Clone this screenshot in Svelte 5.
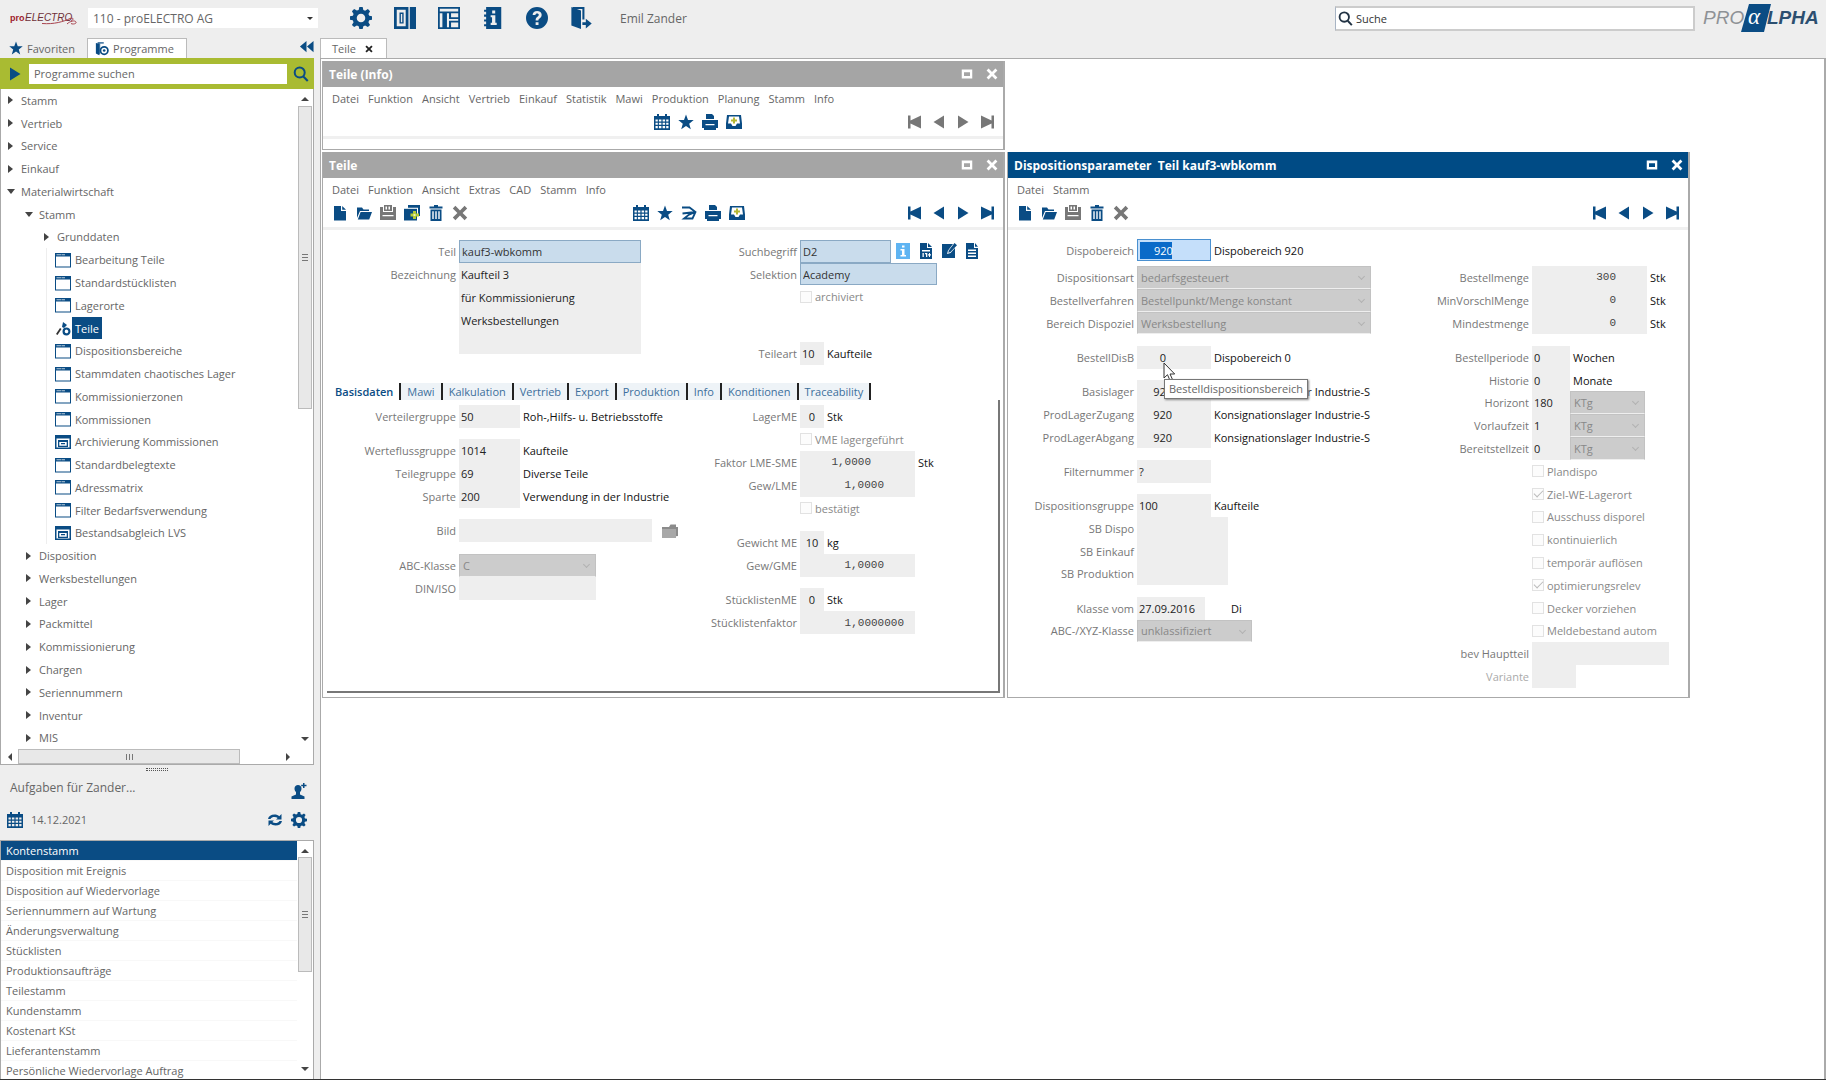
<script lang="ts">
	type Row = {
		at: number;
		label?: string;
		kind?: 'text' | 'area' | 'select' | 'check';
		value?: string;
		size?: string;
		after?: string;
		look?: string;
		checked?: boolean;
		faded?: boolean;
		wideGap?: boolean;
		icons?: string[];
		span?: number;
		trail?: number;
	};

	type TreeRow = { text: string; level: number; open?: boolean; icon?: string; selected?: boolean };

	const tree: TreeRow[] = [
		{ text: 'Stamm', level: 0 },
		{ text: 'Vertrieb', level: 0 },
		{ text: 'Service', level: 0 },
		{ text: 'Einkauf', level: 0 },
		{ text: 'Materialwirtschaft', level: 0, open: true },
		{ text: 'Stamm', level: 1, open: true },
		{ text: 'Grunddaten', level: 2 },
		{ text: 'Bearbeitung Teile', level: 3, icon: 'window' },
		{ text: 'Standardstücklisten', level: 3, icon: 'window' },
		{ text: 'Lagerorte', level: 3, icon: 'window' },
		{ text: 'Teile', level: 3, icon: 'part', selected: true },
		{ text: 'Dispositionsbereiche', level: 3, icon: 'window' },
		{ text: 'Stammdaten chaotisches Lager', level: 3, icon: 'window' },
		{ text: 'Kommissionierzonen', level: 3, icon: 'window' },
		{ text: 'Kommissionen', level: 3, icon: 'window' },
		{ text: 'Archivierung Kommissionen', level: 3, icon: 'batch' },
		{ text: 'Standardbelegtexte', level: 3, icon: 'window' },
		{ text: 'Adressmatrix', level: 3, icon: 'window' },
		{ text: 'Filter Bedarfsverwendung', level: 3, icon: 'window' },
		{ text: 'Bestandsabgleich LVS', level: 3, icon: 'batch' },
		{ text: 'Disposition', level: 1 },
		{ text: 'Werksbestellungen', level: 1 },
		{ text: 'Lager', level: 1 },
		{ text: 'Packmittel', level: 1 },
		{ text: 'Kommissionierung', level: 1 },
		{ text: 'Chargen', level: 1 },
		{ text: 'Seriennummern', level: 1 },
		{ text: 'Inventur', level: 1 },
		{ text: 'MIS', level: 1 }
	];

	const tasks = [
		'Kontenstamm',
		'Disposition mit Ereignis',
		'Disposition auf Wiedervorlage',
		'Seriennummern auf Wartung',
		'Änderungsverwaltung',
		'Stücklisten',
		'Produktionsaufträge',
		'Teilestamm',
		'Kundenstamm',
		'Kostenart KSt',
		'Lieferantenstamm',
		'Persönliche Wiedervorlage Auftrag'
	];

	const topIcons = ['gear', 'columns', 'layout', 'notebook', 'help', 'exit'];
	const navIcons = ['first', 'prev', 'next', 'last'];

	const infoMenu = ['Datei', 'Funktion', 'Ansicht', 'Vertrieb', 'Einkauf', 'Statistik', 'Mawi', 'Produktion', 'Planung', 'Stamm', 'Info'];
	const partMenu = ['Datei', 'Funktion', 'Ansicht', 'Extras', 'CAD', 'Stamm', 'Info'];
	const partTabs = ['Basisdaten', 'Mawi', 'Kalkulation', 'Vertrieb', 'Export', 'Produktion', 'Info', 'Konditionen', 'Traceability'];

	// "at" counts half rows from the top of the form
	const headLeft: Row[] = [
		{ at: 0, label: 'Teil', value: 'kauf3-wbkomm', size: 'w182', look: 'key' },
		{ at: 2, label: 'Bezeichnung', kind: 'area', value: 'Kaufteil 3\nfür Kommissionierung\nWerksbestellungen', size: 'w182', span: 8 }
	];
	const headRight: Row[] = [
		{ at: 0, label: 'Suchbegriff', value: 'D2', size: 'w91', look: 'key', icons: ['info', 'sheet', 'edit', 'doc'] },
		{ at: 2, label: 'Selektion', value: 'Academy', size: 'w137', look: 'key' },
		{ at: 4, kind: 'check', value: 'archiviert' },
		{ at: 9, label: 'Teileart', value: '10', size: 'w24', after: 'Kaufteile' }
	];
	const baseLeft: Row[] = [
		{ at: 0, label: 'Verteilergruppe', value: '50', size: 'w61', after: 'Roh-,Hilfs- u. Betriebsstoffe' },
		{ at: 3, label: 'Werteflussgruppe', value: '1014', size: 'w61', after: 'Kaufteile' },
		{ at: 5, label: 'Teilegruppe', value: '69', size: 'w61', after: 'Diverse Teile' },
		{ at: 7, label: 'Sparte', value: '200', size: 'w61', after: 'Verwendung in der Industrie' },
		{ at: 10, label: 'Bild', value: '', size: 'w193', icons: ['folder'] },
		{ at: 13, label: 'ABC-Klasse', kind: 'select', value: 'C', size: 'w137' },
		{ at: 15, label: 'DIN/ISO', value: '', size: 'w137' }
	];
	const baseRight: Row[] = [
		{ at: 0, label: 'LagerME', value: '0', size: 'w24', look: 'center', after: 'Stk' },
		{ at: 2, kind: 'check', value: 'VME lagergeführt' },
		{ at: 4, label: 'Faktor LME-SME', value: '1,0000', size: 'w115', look: 'mono', trail: 44, after: 'Stk' },
		{ at: 6, label: 'Gew/LME', value: '1,0000', size: 'w115', look: 'mono', trail: 31 },
		{ at: 8, kind: 'check', value: 'bestätigt' },
		{ at: 11, label: 'Gewicht ME', value: '10', size: 'w24', look: 'center', after: 'kg' },
		{ at: 13, label: 'Gew/GME', value: '1,0000', size: 'w115', look: 'mono', trail: 31 },
		{ at: 16, label: 'StücklistenME', value: '0', size: 'w24', look: 'center', after: 'Stk' },
		{ at: 18, label: 'Stücklistenfaktor', value: '1,0000000', size: 'w115', look: 'mono', trail: 11 }
	];
	const areaRow: Row[] = [
		{ at: 0, label: 'Dispobereich', value: '920', size: 'w74', look: 'active', after: 'Dispobereich 920' }
	];
	const planLeft: Row[] = [
		{ at: 0, label: 'Dispositionsart', kind: 'select', value: 'bedarfsgesteuert', size: 'w234' },
		{ at: 2, label: 'Bestellverfahren', kind: 'select', value: 'Bestellpunkt/Menge konstant', size: 'w234' },
		{ at: 4, label: 'Bereich Dispoziel', kind: 'select', value: 'Werksbestellung', size: 'w234' },
		{ at: 7, label: 'BestellDisB', value: '0', size: 'w74', look: 'right', trail: 45, after: 'Dispobereich 0' },
		{ at: 10, label: 'Basislager', value: '920', size: 'w74', look: 'right', trail: 39, after: 'Konsignationslager Industrie-S' },
		{ at: 12, label: 'ProdLagerZugang', value: '920', size: 'w74', look: 'right', trail: 39, after: 'Konsignationslager Industrie-S' },
		{ at: 14, label: 'ProdLagerAbgang', value: '920', size: 'w74', look: 'right', trail: 39, after: 'Konsignationslager Industrie-S' },
		{ at: 17, label: 'Filternummer', value: '?', size: 'w74' },
		{ at: 20, label: 'Dispositionsgruppe', value: '100', size: 'w74', after: 'Kaufteile' },
		{ at: 22, label: 'SB Dispo', value: '', size: 'w91' },
		{ at: 24, label: 'SB Einkauf', value: '', size: 'w91' },
		{ at: 26, label: 'SB Produktion', value: '', size: 'w91' },
		{ at: 29, label: 'Klasse vom', value: '27.09.2016', size: 'w68', after: 'Di', wideGap: true },
		{ at: 31, label: 'ABC-/XYZ-Klasse', kind: 'select', value: 'unklassifiziert', size: 'w115' }
	];
	const planRight: Row[] = [
		{ at: 0, label: 'Bestellmenge', value: '300', size: 'w115', look: 'mono', trail: 31, after: 'Stk' },
		{ at: 2, label: 'MinVorschlMenge', value: '0', size: 'w115', look: 'mono', trail: 31, after: 'Stk' },
		{ at: 4, label: 'Mindestmenge', value: '0', size: 'w115', look: 'mono', trail: 31, after: 'Stk' },
		{ at: 7, label: 'Bestellperiode', value: '0', size: 'w38', after: 'Wochen' },
		{ at: 9, label: 'Historie', value: '0', size: 'w38', after: 'Monate' },
		{ at: 11, label: 'Horizont', value: '180', size: 'w38', look: 'unit' },
		{ at: 13, label: 'Vorlaufzeit', value: '1', size: 'w38', look: 'unit' },
		{ at: 15, label: 'Bereitstellzeit', value: '0', size: 'w38', look: 'unit' },
		{ at: 17, kind: 'check', value: 'Plandispo' },
		{ at: 19, kind: 'check', value: 'Ziel-WE-Lagerort', checked: true },
		{ at: 21, kind: 'check', value: 'Ausschuss disporel' },
		{ at: 23, kind: 'check', value: 'kontinuierlich' },
		{ at: 25, kind: 'check', value: 'temporär auflösen' },
		{ at: 27, kind: 'check', value: 'optimierungsrelev', checked: true },
		{ at: 29, kind: 'check', value: 'Decker vorziehen' },
		{ at: 31, kind: 'check', value: 'Meldebestand autom' },
		{ at: 33, label: 'bev Hauptteil', value: '', size: 'w137' },
		{ at: 35, label: 'Variante', value: '', size: 'w44', faded: true }
	];
</script>

{#snippet icon(name: string)}
	<svg class="icon" viewBox="0 0 16 16" fill="currentColor" aria-hidden="true">
		{#if name === 'gear'}
			<path fill-rule="evenodd" d="M6.8 0h2.4l.5 2.200 1.300.5 2-1.200 1.600 1.600-1.200 2 .6 1.300 2 .4v2.400l-2.100.5-.5 1.300 1.200 2-1.600 1.600-2-1.200-1.300.6L9.200 16H6.800l-.5-2-1.300-.6-2 1.200L1.400 13l1.200-2-.6-1.300L0 9.200V6.800l2.100-.5.5-1.300-1.200-2L3 1.400l2 1.200 1.300-.5zM8 4.900a3.100 3.100 0 1 0 0 6.200 3.100 3.100 0 0 0 0-6.200z" />
		{:else if name === 'columns'}
			<path fill-rule="evenodd" d="M0 0h10.500v16H0zM2 2v12h6.500V2zM11.500 0h4.500v16h-4.500z" /><path fill-rule="evenodd" d="M4 4h3v8H4zM5 5v6h1V5z" />
		{:else if name === 'layout'}
			<path fill-rule="evenodd" d="M0 0h16v16H0zM1.300 1.300v1.900h13.400V1.300zM1.300 4.500v10.200h1.900V4.500zM6.500 4.500v10.200h1.500V10h6.700V8.800H8V4.500zM9.500 4.500v3h5.200v-3zM9.500 11.300v3.400h5.200v-3.400z" />
		{:else if name === 'notebook'}
			<path fill-rule="evenodd" d="M3 0h11v16H3v-2H1.500v-1.500H3v-2H1.500V9H3V7H1.500V5.500H3v-2H1.500V2H3zM7.400 2.500v2.200h2.200V2.500zM6.300 6v1.500h1v4h-1V13h4.400v-1.500h-1V6z" />
		{:else if name === 'help'}
			<path fill-rule="evenodd" d="M8 0a8 8 0 1 0 0 16A8 8 0 0 0 8 0zM4.800 5.800C4.900 4 6.200 2.900 8.100 2.900c1.900 0 3.300 1.100 3.300 2.800 0 1.300-.7 2-1.500 2.600-.8.500-.9.800-.9 1.500H7c0-1.300.3-2 1.300-2.700.7-.5 1-.8 1-1.400 0-.6-.5-1-1.200-1-.8 0-1.200.4-1.300 1.200zM7 11h2.100v2.100H7z" />
		{:else if name === 'exit'}
			<path d="M1 0l7 2.500V16l-7-2.500z" /><path d="M2 0h8.500v9H9V1.400H2zM9 11h2.500V8.500L15.800 12l-4.300 3.700V13H9z" />
		{:else if name === 'star'}
			<path d="M8 .5l2 5.400 5.700.2-4.500 3.600 1.600 5.600L8 12.100l-4.800 3.200 1.600-5.600L.3 6.100 6 5.900z" />
		{:else if name === 'programs'}
			<path d="M1 1l4 1v13l-4-2z" /><path d="M3 0h7v2H6v12H3z" opacity=".7" />
			<path fill-rule="evenodd" d="M10.500 4.500a5 5 0 1 0 0 10.500 5 5 0 0 0 0-10.500zM10.500 6.500a3.200 3.200 0 1 1 0 6.500 3.200 3.200 0 0 1 0-6.500z" /><circle cx="10.500" cy="9.700" r="1.500" />
		{:else if name === 'search'}
			<path fill="none" stroke="currentColor" stroke-width="2" d="M6.700 1.500a5 5 0 1 1 0 10 5 5 0 0 1 0-10z" /><path d="M9.600 11.200l1.500-1.500 4.400 4.600-1.500 1.500z" />
		{:else if name === 'collapse'}
			<path d="M8 2v12L1 8zM15.500 2v12l-7-6z" />
		{:else if name === 'window'}
			<path fill-rule="evenodd" d="M0 1h16v14.500H0zM1 4.500v10h14v-10z" /><path fill="#fff" d="M1.500 2.300h5v1h-5zM7 2.300h3v1H7z" opacity=".7" />
		{:else if name === 'batch'}
			<path fill-rule="evenodd" d="M0 1h16v14H0zM1.500 4.500v9h13v-9z" /><path fill-rule="evenodd" d="M3 6h10v7H3zM4.300 8v3.800h7.400V8zM6 9h4v1.200H6z" />
		{:else if name === 'part'}
			<path d="M1 14L5 8l1.500 1-4 6z" fill="#333" /><path d="M8 2l4 3-3 3-2-1z" />
			<path fill="none" stroke="currentColor" stroke-width="2.200" d="M11.500 8.500a2.900 2.900 0 1 1 0 5.800 2.900 2.900 0 0 1 0-5.800z" />
		{:else if name === 'user'}
			<path d="M7 2c2 0 3.500 1.500 3.500 3.500 0 1.700-.8 2.800-1.500 3.600v2.400l4.500 2V16h-13v-2.500l4.500-2V9.100C4.300 8.300 3.500 7.200 3.500 5.500 3.500 3.500 5 2 7 2zM12 0h1.500v1.800h2v1.500h-2V5H12V3.300h-1.800V1.800H12z" />
		{:else if name === 'calendar'}
			<path fill-rule="evenodd" d="M3 0h2v2h6V0h2v2h3v14H0V2h3zM1.500 5.500v2h2.300v-2zM4.900 5.500v2h2.500v-2zM8.600 5.500v2h2.500v-2zM12.200 5.500v2h2.300v-2zM1.500 8.700v2h2.300v-2zM4.900 8.700v2h2.500v-2zM8.600 8.700v2h2.500v-2zM12.200 8.700v2h2.300v-2zM1.500 12v2.300h2.300V12zM4.900 12v2.300h2.500V12zM8.600 12v2.300h2.500V12zM12.200 12v2.300h2.300V12z" />
		{:else if name === 'refresh'}
			<path d="M1 7c.6-3 3-4.500 6.500-4.500 2 0 3.600.6 4.800 1.700L14.500 2v5.500H9L10.700 6C9.800 5.300 8.800 5 7.500 5 5.600 5 4.400 5.600 3.500 7zM15 9c-.6 3-3 4.500-6.500 4.500-2 0-3.600-.6-4.800-1.700L1.500 14V8.500H7L5.300 10c.9.700 1.900 1 3.200 1 1.900 0 3.100-.6 4-2z" />
		{:else if name === 'new'}
			<path d="M2 1h7v5h5v9.500H2z" /><path d="M10.200 1L14 4.800h-3.800z" />
		{:else if name === 'open'}
			<path d="M1 2.500h5l1.500 2H13V6H4L1 13z" /><path d="M4.600 7H16l-2.800 7.500H1.800z" />
		{:else if name === 'save'}
			<path fill-rule="evenodd" d="M0 2h3v5h10V2h3v13H0zM2.500 10v1.200h11V10z" /><path fill-rule="evenodd" d="M4 0h8v6H4zM5.500 1.500v3h1.500v-3zM8.500 1.500v3H10v-3z" />
		{:else if name === 'copy'}
			<path d="M4 0h12v11h-2V2.800H4z" /><path d="M0 3.800h13V15.500H0z" /><path fill="#b5cc34" d="M9 6h3v2.500h3v3h-3V14H9v-2.500H6.500v-3H9z" /><path fill="#fff" d="M9.500 9h2v2h-2z" opacity=".7" />
		{:else if name === 'trash'}
			<path fill-rule="evenodd" d="M6 0h4v1.500h4.500v2h-13v-2H6zM2.500 4.500h11V16h-11zM4.300 6.300v7.700h1.400V6.300zM7.300 6.300v7.700h1.400V6.300zM10.300 6.300v7.700h1.400V6.300z" />
		{:else if name === 'cross'}
			<path d="M3.400.8L8 5.400 12.600.8l2.600 2.600L10.600 8l4.600 4.600-2.600 2.600L8 10.600l-4.600 4.600-2.600-2.600L5.400 8 .8 3.400z" />
		{:else if name === 'flow'}
			<path fill="none" stroke="currentColor" stroke-width="1.800" d="M1 2.500h7.500l6 4.500-3 6.500H3l4.500-3.500 7-3-13 1.500" />
		{:else if name === 'print'}
			<path d="M4 0h6l2 2v3H4z" /><path fill-rule="evenodd" d="M0 6h16v8h-2v2H2v-2H0zM3.500 10v1.200h9V10z" />
		{:else if name === 'inbox'}
			<path fill-rule="evenodd" d="M1 1h14l1 8.500V15H0V9.500zM3 2.500L2 9.500h3l1.500 2.500h3L11 9.500h3l-1-7z" /><path fill="#b5b834" d="M7 3.500h2v2h2v2H9v2H7v-2H5v-2h2z" />
		{:else if name === 'first'}
			<path d="M1 1.500h2.500v5L14 1.500v13L3.500 9.500v5H1z" />
		{:else if name === 'prev'}
			<path d="M13 1.500v13L2.500 8z" />
		{:else if name === 'next'}
			<path d="M3 1.500v13L13.500 8z" />
		{:else if name === 'last'}
			<path d="M15 1.500h-2.500v5L2 1.500v13l10.500-5v5H15z" />
		{:else if name === 'info'}
			<path fill="#5fb4f2" d="M1 0h14v16H1z" /><path fill="#fff" d="M7 2.500h2.500v2H7zM5.500 6h4v6H11v1.500H5.500V12H7V7.500H5.500z" />
		{:else if name === 'sheet'}
			<path fill-rule="evenodd" d="M2 0h7v5h5v11H2zM4 7v1.500h8V7zM4.500 10v4h1.300v-4zM7 10v1.300h1V14h1.300v-4zM11 10v1.300h-1v1.200h1V14h1v-1.500h1v-1.200h-1V10z" /><path d="M10 0l4 4h-4z" />
		{:else if name === 'edit'}
			<path d="M1 1h11L7 7.500 6 11l3.500-1L14 5v10H1z" /><path d="M13.500 0L16 2.300 9.500 9 7.200 9.700 8 7.300z" />
		{:else if name === 'doc'}
			<path fill-rule="evenodd" d="M2 0h8v5h4v11H2zM4 6.500V8h8V6.500zM4 9.500V11h8V9.500zM4 12.500V14h8v-1.500z" /><path d="M11 0l3 3.800h-3z" />
		{:else if name === 'folder'}
			<path fill="#8b8b8b" d="M0 15V4h7l1.500-2.500H14V4h2v9z" /><path fill="#a8a8a8" d="M0 6h14v9H0z" />
		{:else if name === 'maximize'}
			<path fill-rule="evenodd" d="M1 2h14v12H1zM4 5.500v5h8v-5z" />
		{/if}
	</svg>
{/snippet}

{#snippet tools(names: string[], gray: string[] = [])}
	{#each names as name}
		<button class="tool" class:gray={gray.includes(name)} type="button" aria-label={name}>{@render icon(name)}</button>
	{/each}
{/snippet}

{#snippet titleBar(title: string)}
	<header class="title-bar">
		<h2>{title}</h2>
		<button type="button" aria-label="Maximieren">{@render icon('maximize')}</button>
		<button type="button" aria-label="Schließen">{@render icon('cross')}</button>
	</header>
{/snippet}

{#snippet menuBar(items: string[])}
	<nav class="menu-bar">
		{#each items as item}
			<button type="button">{item}</button>
		{/each}
	</nav>
{/snippet}

{#snippet form(id: string, rows: Row[])}
	{#each rows as row}
		<div class="row" class:tall={row.kind === 'area'} class:faded={row.faded} style:grid-row="{row.at + 1} / span {row.span ?? 2}">
			{#if row.kind === 'check'}
				<label class="check">
					<input type="checkbox" checked={row.checked} disabled />
					<span>{row.value}</span>
				</label>
			{:else}
				<label class="caption" for="{id}-{row.at}">{row.label}</label>
				{#if row.kind === 'area'}
					<textarea id="{id}-{row.at}" class="field {row.size}">{row.value}</textarea>
				{:else if row.kind === 'select'}
					<span class="drop {row.size}">
						<select id="{id}-{row.at}" disabled><option>{row.value}</option></select>
					</span>
				{:else}
					<input
						id="{id}-{row.at}"
						class="field {row.size} {row.look ?? ''}"
						type="text"
						value={row.value}
						style:padding-right={row.trail ? `${row.trail}px` : null}
					/>
				{/if}
				{#if row.look === 'unit'}
					<span class="drop w75">
						<select aria-label="{row.label} Einheit" disabled><option>KTg</option></select>
					</span>
				{/if}
				{#if row.after}
					<span class="after" class:wide={row.wideGap}>{row.after}</span>
				{/if}
				{#if row.icons}
					<span class="row-icons">{@render tools(row.icons)}</span>
				{/if}
			{/if}
		</div>
	{/each}
{/snippet}

<div class="app">
	<header class="top-bar">
		<svg class="brand" viewBox="0 0 72 20" role="img" aria-label="proELECTRO">
			<text x="0" y="13" class="brand-pro">pro</text>
			<text x="15" y="13" class="brand-electro">ELECTRO</text>
			<path d="M32 15.500c12 1 22-2 28-5 4-1 4 1 1 2.500M57 16c3-3 8-4 9-2s-4 2.500-5 1.500" fill="none" stroke="#a8434e" />
		</svg>
		<span class="drop company">
			<select aria-label="Firma"><option>110 - proELECTRO AG</option></select>
		</span>
		<div class="top-tools">{@render tools(topIcons)}</div>
		<span class="user">Emil Zander</span>
		<label class="global-search">
			{@render icon('search')}
			<input type="text" value="Suche" aria-label="Suche" />
		</label>
		<svg class="logo" viewBox="0 0 122 30" role="img" aria-label="proALPHA">
			<text x="1" y="21" class="logo-pro">PRO</text>
			<path d="M47 1h22l-7 28H39z" fill="#0a4c84" />
			<text x="46" y="21" class="logo-alpha">α</text>
			<text x="65" y="21" class="logo-lpha">LPHA</text>
		</svg>
	</header>

	<aside class="sidebar">
		<div class="side-tabs">
			<button class="side-tab" type="button">{@render icon('star')}Favoriten</button>
			<button class="side-tab active" type="button">{@render icon('programs')}Programme</button>
			<button class="collapse" type="button" aria-label="Einklappen">{@render icon('collapse')}</button>
		</div>
		<div class="program-search">
			<span class="play">{@render icon('next')}</span>
			<input type="text" value="Programme suchen" aria-label="Programme suchen" />
			{@render icon('search')}
		</div>
		<div class="tree">
			<ul>
				{#each tree as node}
					<li class="level-{node.level}">
						{#if node.icon}
							{@render icon(node.icon)}
						{:else}
							<i class="arrow" class:open={node.open}></i>
						{/if}
						<a href="#programm" class:selected={node.selected}>{node.text}</a>
					</li>
				{/each}
			</ul>
			<div class="v-scroll">
				<i class="tip up"></i>
				<i class="thumb tall"></i>
				<i class="tip down"></i>
			</div>
			<div class="h-scroll">
				<i class="tip left"></i>
				<i class="thumb flat"></i>
				<i class="tip right"></i>
			</div>
		</div>
		<i class="grip"></i>
		<section class="tasks">
			<div class="tasks-head">
				<h3>Aufgaben für Zander...</h3>
				{@render icon('user')}
			</div>
			<div class="tasks-date">
				{@render icon('calendar')}
				<span>14.12.2021</span>
				{@render icon('refresh')}
				{@render icon('gear')}
			</div>
			<div class="task-list">
				<ul>
					{#each tasks as task, i}
						<li class:selected={i === 0}>{task}</li>
					{/each}
				</ul>
				<div class="v-scroll">
					<i class="tip up"></i>
					<i class="thumb short"></i>
					<i class="tip down"></i>
				</div>
			</div>
		</section>
	</aside>

	<main class="workspace">
		<div class="work-tabs">
			<div class="work-tab">
				<span>Teile</span>
				<button type="button" aria-label="Tab schließen">{@render icon('cross')}</button>
			</div>
		</div>
		<div class="desktop">
			<section class="window info-window">
				{@render titleBar('Teile (Info)')}
				{@render menuBar(infoMenu)}
				<div class="tool-bar shifted">
					<div></div>
					<div>{@render tools(['calendar', 'star', 'print', 'inbox'])}</div>
					<div>{@render tools(navIcons, navIcons)}</div>
				</div>
			</section>

			<section class="window part-window">
				{@render titleBar('Teile')}
				{@render menuBar(partMenu)}
				<div class="tool-bar">
					<div>{@render tools(['new', 'open', 'save', 'copy', 'trash', 'cross'], ['save', 'cross'])}</div>
					<div>{@render tools(['calendar', 'star', 'flow', 'print', 'inbox'])}</div>
					<div>{@render tools(navIcons)}</div>
				</div>
				<div class="part-head">
					<div class="form">{@render form('head-left', headLeft)}</div>
					<div class="form">{@render form('head-right', headRight)}</div>
				</div>
				<div class="part-tabs">
					{#each partTabs as tab, i}
						<button type="button" class:active={i === 0}>{tab}</button>
					{/each}
				</div>
				<div class="part-panel">
					<div class="form">{@render form('base-left', baseLeft)}</div>
					<div class="form">{@render form('base-right', baseRight)}</div>
				</div>
			</section>

			<section class="window plan-window">
				{@render titleBar('Dispositionsparameter  Teil kauf3-wbkomm')}
				{@render menuBar(['Datei', 'Stamm'])}
				<div class="tool-bar">
					<div>{@render tools(['new', 'open', 'save', 'trash', 'cross'], ['save', 'cross'])}</div>
					<div></div>
					<div>{@render tools(navIcons)}</div>
				</div>
				<div class="plan-area">{@render form('area', areaRow)}</div>
				<div class="plan-body">
					<div class="form">{@render form('plan-left', planLeft)}</div>
					<div class="form">{@render form('plan-right', planRight)}</div>
				</div>
				<svg class="pointer" viewBox="0 0 13 20" aria-hidden="true">
					<path d="M1 1v15l3.500-3.300L7 18.500l2.500-1L7 12h4.700z" fill="#fff" stroke="#333" />
				</svg>
				<div class="tooltip" role="tooltip">Bestelldispositionsbereich</div>
			</section>
		</div>
	</main>
</div>

<style>
	:global(body) {
		background: #eee;
	}

	.app {
		--blue: #0a4c84;
		display: grid;
		grid-template-columns: 320px minmax(0, 1fr);
		grid-template-rows: 36px minmax(0, 1fr);
		height: 100vh;
		box-sizing: border-box;
		border-bottom: 1px solid #333;
		overflow: hidden;
		font-family: 'Open Sans', 'Noto Sans', sans-serif;
		font-size: 11px;
		color: #666;
	}

	.app :global(*) {
		box-sizing: border-box;
	}

	button,
	input,
	select,
	textarea {
		font: inherit;
		color: inherit;
		border: 0;
		margin: 0;
		padding: 0;
		background: none;
		border-radius: 0;
		outline: none;
	}

	ul {
		list-style: none;
		margin: 0;
		padding: 0;
	}

	.icon {
		width: 16px;
		height: 16px;
		flex: none;
		display: block;
		color: var(--blue);
	}

	/* top bar */
	.top-bar {
		grid-column: 1 / -1;
		display: flex;
		align-items: center;
		padding: 0 2px 0 10px;
	}

	.brand {
		width: 72px;
		height: 20px;
		margin-right: 6px;
	}

	.brand-pro {
		font: bold 9px 'Liberation Sans', sans-serif;
		fill: #a01c2c;
	}

	.brand-electro {
		font: italic 10px 'Liberation Sans', sans-serif;
		fill: #6e3038;
	}

	.company {
		width: 230px;
		height: 20px;
		margin-right: 32px;
	}

	.drop.company select {
		background: #fff;
		border: 0;
		padding-left: 5px;
		font-size: 12px;
		color: #666;
		opacity: 1;
	}

	.drop.company::after {
		border: 3px solid transparent;
		border-top-color: #333;
		width: 0;
		height: 0;
		transform: none;
		right: 5px;
		top: 9px;
	}

	.top-tools {
		display: flex;
		gap: 22px;
	}

	.top-tools .icon {
		width: 22px;
		height: 22px;
	}

	.user {
		margin-left: 28px;
		font-size: 12px;
		color: #666;
	}

	.global-search {
		display: flex;
		align-items: center;
		gap: 3px;
		width: 360px;
		height: 25px;
		margin-left: auto;
		padding-left: 2px;
		background: #fff;
		border: 2px solid #ccc;
		border-left: 1px solid #a8b4c4;
	}

	.global-search .icon {
		width: 15px;
		height: 15px;
		color: #234;
	}

	.global-search input {
		flex: 1;
		color: #333;
	}

	.logo {
		width: 122px;
		height: 30px;
		margin-left: 7px;
	}

	.logo-pro {
		font: italic 19px 'Liberation Sans', sans-serif;
		fill: #8e9296;
	}

	.logo-lpha {
		font: italic bold 19px 'Liberation Sans', sans-serif;
		fill: #2c4f70;
	}

	.logo-alpha {
		font: italic 23px 'Liberation Serif', serif;
		fill: #fff;
	}

	/* sidebar */
	.sidebar {
		display: flex;
		flex-direction: column;
		min-height: 0;
		padding-right: 6px;
	}

	.side-tabs {
		display: flex;
		align-items: end;
		height: 22px;
		flex: none;
	}

	.side-tab {
		display: flex;
		align-items: center;
		gap: 4px;
		height: 20px;
		padding: 0 12px 0 9px;
	}

	.side-tab .icon {
		width: 14px;
		height: 14px;
	}

	.side-tab.active {
		background: #fff;
		border: 1px solid #bbb;
		border-bottom: 0;
		padding: 0 12px 0 7px;
	}

	.collapse {
		margin: 0 0 4px auto;
	}

	.collapse .icon {
		width: 15px;
		height: 15px;
	}

	.program-search {
		display: flex;
		align-items: center;
		gap: 6px;
		flex: none;
		height: 31px;
		padding: 0 5px 0 7px;
		background: #a9bb32;
	}

	.program-search input {
		flex: 1;
		min-width: 0;
		height: 20px;
		padding-left: 5px;
		background: #fff;
	}

	.tree {
		flex: 1;
		min-height: 0;
		display: grid;
		grid-template-columns: minmax(0, 1fr) 16px;
		grid-template-rows: minmax(0, 1fr) 15px;
		background: #fff;
		border: 1px solid #aaa;
		border-top: 0;
	}

	.tree ul {
		display: flex;
		flex-direction: column;
		min-height: 0;
	}

	.tree li {
		flex: 1;
		min-height: 0;
		display: flex;
		align-items: center;
		white-space: nowrap;
	}

	.tree a {
		display: flex;
		align-items: center;
		height: 22px;
		padding: 0 3px;
		color: inherit;
		text-decoration: none;
	}

	.tree a.selected {
		background: var(--blue);
		color: #fff;
	}

	.level-0 {
		padding-left: 6px;
	}

	.level-1 {
		padding-left: 24px;
	}

	.level-2 {
		padding-left: 42px;
	}

	.level-3 {
		padding-left: 54px;
		gap: 1px;
		background: linear-gradient(#eee, #eee) 45px 0 / 1px 100% no-repeat;
	}

	.arrow {
		width: 11px;
		height: 8px;
		border: 4px solid transparent;
		border-left: 5px solid #444;
		margin: 0 -1px 0 1px;
	}

	.arrow.open {
		width: 8px;
		height: 4px;
		border: 4px solid transparent;
		border-top: 5px solid #444;
		border-bottom: 0;
		margin: 0 3px 0 0;
	}

	.v-scroll {
		display: flex;
		flex-direction: column;
		align-items: center;
		padding: 8px 0;
	}

	.h-scroll {
		display: flex;
		align-items: center;
		padding: 0 7px;
	}

	.tip {
		width: 0;
		height: 0;
		flex: none;
		border: 4px solid transparent;
	}

	.tip.up {
		border-top: 0;
		border-bottom-color: #444;
	}

	.tip.down {
		border-bottom: 0;
		border-top-color: #444;
		margin-top: auto;
	}

	.tip.left {
		border-left: 0;
		border-right-color: #444;
	}

	.tip.right {
		border-right: 0;
		border-left-color: #444;
		margin-left: auto;
	}

	.thumb {
		display: flex;
		align-items: center;
		justify-content: center;
		background: #e8e8e8;
		border: 1px solid #bbb;
	}

	.thumb::before {
		content: '';
		width: 6px;
		height: 7px;
		background: repeating-linear-gradient(#777 0 1px, transparent 1px 3px);
	}

	.thumb.tall {
		width: 14px;
		height: 47%;
		margin-top: 5px;
	}

	.thumb.short {
		width: 14px;
		height: 52%;
		margin-top: 4px;
	}

	.thumb.flat {
		width: 222px;
		height: 15px;
		margin-left: 6px;
	}

	.thumb.flat::before {
		width: 7px;
		height: 6px;
		background: repeating-linear-gradient(90deg, #777 0 1px, transparent 1px 3px);
	}

	.grip {
		width: 22px;
		height: 3px;
		flex: none;
		margin: 3px auto 4px;
		border-top: 1px dotted #555;
		border-bottom: 1px dotted #555;
	}

	.tasks {
		flex: none;
	}

	.tasks-head,
	.tasks-date {
		display: flex;
		align-items: center;
		padding: 0 7px;
	}

	.tasks-head {
		height: 24px;
	}

	.tasks-head h3 {
		margin: 0 auto 0 3px;
		font-size: 12px;
		font-weight: 400;
	}

	.tasks-head .icon {
		align-self: end;
	}

	.tasks-date {
		height: 41px;
	}

	.tasks-date span {
		margin: 0 auto 0 8px;
	}

	.tasks-date .icon:last-child {
		margin-left: 8px;
	}

	.task-list {
		display: grid;
		grid-template-columns: minmax(0, 1fr) 16px;
		height: 239px;
		overflow: hidden;
		background: #fff;
		border: 1px solid #aaa;
		border-bottom: 0;
	}

	.task-list li {
		height: 20px;
		line-height: 20px;
		padding-left: 5px;
		border-bottom: 1px solid #f8f8f8;
	}

	.task-list li.selected {
		background: var(--blue);
		color: #fff;
	}

	.task-list .v-scroll {
		height: 238px;
	}

	/* workspace */
	.workspace {
		display: flex;
		flex-direction: column;
		min-width: 0;
		min-height: 0;
	}

	.work-tabs {
		flex: none;
		height: 22px;
		display: flex;
		align-items: end;
	}

	.work-tab {
		display: flex;
		align-items: center;
		gap: 9px;
		height: 20px;
		padding: 0 13px 0 11px;
		background: #fff;
		border: 1px solid #bbb;
		border-bottom: 0;
	}

	.work-tab .icon {
		width: 8px;
		height: 8px;
		color: #222;
	}

	.desktop {
		position: relative;
		flex: 1;
		background: #fff;
		border: 1px solid #aaa;
		border-width: 1px 2px 0 1px;
	}

	.window {
		position: absolute;
		width: 683px;
		background: #fff;
		border: 1px solid #aaa;
		border-width: 0 2px 1px 1px;
	}

	.info-window {
		left: 1px;
		top: 2px;
		height: 89px;
	}

	.part-window {
		left: 1px;
		top: 93px;
		height: 546px;
	}

	.plan-window {
		left: 686px;
		top: 93px;
		height: 546px;
	}

	.title-bar {
		display: flex;
		align-items: center;
		gap: 13px;
		height: 26px;
		padding: 0 5px 0 6px;
		background: #a5a5a5;
		color: #fff;
	}

	.title-bar h2 {
		margin: 0 auto 0 0;
		font-size: 12px;
		font-weight: 700;
		white-space: pre;
	}

	.title-bar .icon {
		width: 12px;
		height: 12px;
		color: #fff;
	}

	.plan-window .title-bar {
		background: #004b85;
	}

	.menu-bar {
		display: flex;
		gap: 9px;
		height: 22px;
		padding: 0 9px;
	}

	.tool {
		display: block;
	}

	.tool.gray .icon {
		color: #777;
	}

	.tool-bar {
		display: grid;
		grid-template-columns: 301px 1fr auto;
		align-items: center;
		height: 30px;
		padding: 0 8px 2px 9px;
		border-bottom: 3px solid #f0f0f0;
	}

	.tool-bar.shifted {
		grid-template-columns: 322px 1fr auto;
	}

	.tool-bar > div {
		display: flex;
		gap: 8px;
	}

	/* forms: every row spans two half-row tracks */
	.form {
		display: grid;
	}

	.row {
		display: flex;
		min-height: 0;
		align-items: center;
		white-space: nowrap;
	}

	.row.tall {
		align-items: start;
		line-height: 23px;
	}

	.part-head,
	.part-panel,
	.plan-body {
		display: grid;
	}

	.part-head {
		grid-template-columns: 341px 1fr;
		height: 125px;
		margin-top: 10px;
	}

	.part-head .form {
		grid-template-rows: repeat(11, minmax(0, 1fr));
	}

	.part-panel {
		grid-template-columns: 341px 1fr;
		align-content: start;
		height: 293px;
		margin: 0 3px 0 4px;
		padding-top: 5px;
		border: solid #777;
		border-width: 0 2px 2px 0;
	}

	.part-panel .form {
		height: 229px;
		margin-left: -4px;
		grid-template-rows: repeat(20, minmax(0, 1fr));
	}

	.plan-area {
		height: 23px;
		margin-top: 9px;
	}

	.plan-body {
		grid-template-columns: 395px 1fr;
		height: 422px;
		margin-top: 4px;
	}

	.plan-body .form {
		grid-template-rows: repeat(37, minmax(0, 1fr));
	}

	.caption {
		flex: none;
		width: 133px;
		margin-right: 3px;
		text-align: right;
		color: #777;
	}

	.plan-window .caption {
		width: 126px;
	}

	.check {
		display: flex;
		align-items: center;
		gap: 3px;
		margin-left: 136px;
		color: #888;
	}

	.plan-window .check {
		margin-left: 129px;
	}

	.check input {
		appearance: none;
		width: 12px;
		height: 12px;
		background: #fcfcfc;
		border: 1px solid #e2e2e2;
	}

	.check input:checked::before {
		content: '';
		display: block;
		width: 8px;
		height: 4px;
		margin: 1px;
		border: 1px solid #bbb;
		border-width: 0 0 1px 1px;
		transform: rotate(-45deg);
	}

	.faded .caption {
		color: #aaa;
	}

	.field {
		flex: none;
		align-self: stretch;
		height: auto;
		padding: 0 2px;
		background: #eee;
		color: #222;
	}

	textarea.field {
		line-height: 23px;
		resize: none;
		overflow: hidden;
	}

	.field.key {
		background: #c9dcec;
		border: 1px solid #8aa9c4;
		color: #333;
	}

	.field.center {
		text-align: center;
	}

	.field.right {
		text-align: right;
	}

	.field.mono {
		text-align: right;
		font-family: 'Liberation Mono', monospace;
		color: #444;
	}

	/* text of the focused field is shown selected */
	.field.active {
		padding-left: 16px;
		border: 1px solid #4a90d0;
		background: linear-gradient(#0a6ac8, #0a6ac8) 2px 2px / 32px 17px no-repeat #c5dffa;
		color: #fff;
	}

	.plan-area .row {
		height: 22px;
	}

	.drop {
		position: relative;
		display: block;
		flex: none;
		align-self: stretch;
	}

	.top-bar .drop {
		align-self: center;
	}

	.drop select {
		appearance: none;
		display: block;
		width: 100%;
		height: 100%;
		padding-left: 3px;
		background: #ccc;
		border: 1px solid #c2c2c2;
		border-bottom-color: #eee;
		color: #888;
		opacity: 1;
	}

	.drop::after {
		content: '';
		position: absolute;
		right: 7px;
		top: 8px;
		width: 4px;
		height: 4px;
		border: 1px solid #b2b2b2;
		border-width: 0 1px 1px 0;
		transform: rotate(45deg);
	}

	.after {
		margin-left: 3px;
		color: #111;
	}

	.after.wide {
		margin-left: 26px;
	}

	.row-icons {
		display: flex;
		gap: 7px;
		margin-left: 4px;
	}

	.field.w193 ~ .row-icons {
		margin-left: 10px;
	}

	.w24 { width: 24px; }
	.w38 { width: 38px; }
	.w44 { width: 44px; }
	.w61 { width: 61px; }
	.w68 { width: 68px; }
	.w74 { width: 74px; }
	.w75 { width: 75px; }
	.w91 { width: 91px; }
	.w115 { width: 115px; }
	.w137 { width: 137px; }
	.w182 { width: 182px; }
	.w193 { width: 193px; }
	.w234 { width: 234px; }

	.part-tabs {
		display: flex;
		height: 17px;
		margin: 18px 0 0 6px;
	}

	.part-tabs button {
		padding: 0 6px;
		background: #eef3f7;
		border-right: 2px solid #222;
		color: #3c6f9c;
	}

	.part-tabs button.active {
		background: #fff;
		color: var(--blue);
		font-weight: 600;
	}

	.pointer {
		position: absolute;
		left: 155px;
		top: 210px;
		width: 13px;
		height: 20px;
	}

	.tooltip {
		position: absolute;
		left: 156px;
		top: 227px;
		height: 20px;
		padding: 0 4px;
		line-height: 18px;
		background: #fff;
		border: 1px solid #777;
		box-shadow: 1px 1px 2px #888;
	}
</style>
